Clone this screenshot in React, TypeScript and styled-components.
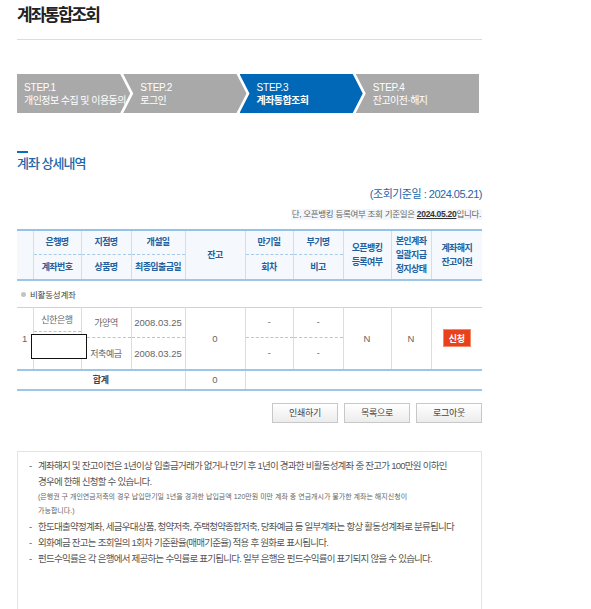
import React from 'react';
import styled, { createGlobalStyle } from 'styled-components';

const GlobalStyle = createGlobalStyle`
  html, body {
    margin: 0;
    padding: 0;
    background: #fff;
  }
  body {
    font-family: "Liberation Sans", "Noto Sans CJK KR", sans-serif;
    color: #555;
  }
`;

const Page = styled.div`
  width: 465px;
  padding-left: 17px;
`;

const PageHeader = styled.header`
  height: 39px;
  border-bottom: 1px solid #dcdcdc;
`;

const Title = styled.h1`
  margin: 0;
  padding-top: 4px;
  font-size: 17px;
  line-height: 24px;
  font-weight: 700;
  letter-spacing: -2px;
  color: #222;
`;

const Steps = styled.ol`
  display: flex;
  width: 462px;
  height: 39px;
  margin: 34px 0 0;
  padding: 0;
  list-style: none;
`;

const arrow = (first: boolean, last: boolean) => {
  const pts = [
    '0 0',
    last ? '100% 0' : 'calc(100% - 10px) 0',
    ...(last ? [] : ['100% 50%']),
    last ? '100% 100%' : 'calc(100% - 10px) 100%',
    '0 100%',
    ...(first ? [] : ['10px 50%']),
  ];
  return `polygon(${pts.join(', ')})`;
};

const Step = styled.li<{ $active?: boolean; $first: boolean; $last: boolean }>`
  flex: 1;
  display: flex;
  flex-direction: column;
  justify-content: center;
  margin-left: ${p => (p.$first ? 0 : -7)}px;
  padding-left: ${p => (p.$first ? 7 : 17)}px;
  background: ${p => (p.$active ? '#0068b7' : '#a9a9a9')};
  clip-path: ${p => arrow(p.$first, p.$last)};
  color: #fff;
  line-height: 13px;
`;

const StepNo = styled.span`
  font-family: "Liberation Sans Narrow", "Liberation Sans", sans-serif;
  font-size: 10px;
  letter-spacing: -0.2px;
`;

const StepLabel = styled.span<{ $active?: boolean }>`
  font-size: 10px;
  letter-spacing: -0.55px;
  font-weight: ${p => (p.$active ? 700 : 400)};
  white-space: nowrap;
`;

const SectionTitle = styled.h2`
  margin: 38px 0 0;
  font-size: 13px;
  line-height: 16px;
  font-weight: 500;
  letter-spacing: -1px;
  color: #2366a8;

  &::before {
    content: '';
    display: block;
    width: 11px;
    height: 2px;
    margin-bottom: 3px;
    background: #0a6ebd;
  }
`;

const BaseDate = styled.p`
  margin: 15px 0 0;
  height: 14px;
  font-size: 11px;
  line-height: 14px;
  letter-spacing: -0.5px;
  text-align: right;
  color: #2366a8;
`;

const NoteLine = styled.div`
  display: flex;
  justify-content: flex-end;
  margin-top: 8px;
  height: 11px;
`;

const NoteText = styled.span`
  padding: 0 1px;
  background: #f3f7fb;
  font-size: 8.5px;
  line-height: 11px;
  letter-spacing: -0.3px;
  color: #666;

  strong {
    color: #333;
    text-decoration: underline;
  }
`;

const TableWrap = styled.div`
  position: relative;
  margin-top: 9px;
`;

const Table = styled.table`
  width: 465px;
  table-layout: fixed;
  border-collapse: collapse;
  border-top: 2px solid #93c3ea;
`;

const Col = styled.col<{ $w: number }>`
  width: ${p => p.$w}px;
`;

const HeadRow = styled.tr<{ $h: number; $bottom?: boolean }>`
  height: ${p => p.$h}px;
  ${p => p.$bottom && 'border-bottom: 2px solid #9cc6e8;'}
`;

const Th = styled.th<{ $split?: boolean; $end?: boolean }>`
  padding: 0;
  font-size: 9px;
  font-weight: 700;
  line-height: 14px;
  letter-spacing: -0.6px;
  color: #22609f;
  background: #f5f9fd;
  border-right: ${p => (p.$end ? 'none' : '1px solid #cbe0f3')};
  ${p => p.$split && 'border-bottom: 1px dashed #a9c9e5;'}
`;

const GroupRow = styled.tr`
  height: 27px;
  border-bottom: 1px solid #bcd7ee;
`;

const GroupCell = styled.td`
  padding: 0 0 0 4px;
  font-size: 8.5px;
  letter-spacing: -0.2px;
  color: #444;

  &::before {
    content: '';
    display: inline-block;
    width: 5px;
    height: 5px;
    margin-right: 4px;
    border-radius: 50%;
    background: #c4c4c4;
    vertical-align: 1px;
  }
`;

const DataRow = styled.tr`
  border-bottom: 2px solid #9cc6e8;
`;

const Td = styled.td<{ $end?: boolean; $num?: boolean; $strong?: boolean }>`
  padding: 0;
  text-align: center;
  vertical-align: middle;
  font-size: ${p => (p.$num ? 9.5 : 9)}px;
  letter-spacing: ${p => (p.$num ? 0 : -0.4)}px;
  font-weight: ${p => (p.$strong ? 700 : 400)};
  color: ${p => (p.$strong ? '#444' : '#666')};
  border-right: ${p => (p.$end ? 'none' : '1px solid #cbe0f3')};
`;

const Half = styled.div<{ $h: number; $dashed?: boolean }>`
  display: flex;
  align-items: center;
  justify-content: center;
  height: ${p => p.$h}px;
  ${p => p.$dashed && 'border-bottom: 1px dashed #a9c9e5;'}
  box-sizing: border-box;
`;

const Num = styled.span`
  font-size: 9.5px;
  letter-spacing: 0;
`;

const ApplyButton = styled.button`
  width: 28px;
  height: 18px;
  padding: 0;
  border: 1px solid #f38a6a;
  background: #e8411c;
  color: #fff;
  font-family: inherit;
  font-size: 9px;
  font-weight: 700;
  letter-spacing: -0.3px;
  cursor: pointer;
`;

const SumRow = styled.tr`
  height: 20px;
  border-bottom: 2px solid #9cc6e8;
`;

const Redacted = styled.div`
  position: absolute;
  left: 14px;
  top: 105px;
  width: 56px;
  height: 25px;
  box-sizing: border-box;
  border: 1.5px solid #111;
  background: #fff;
`;

const Actions = styled.div`
  display: flex;
  justify-content: flex-end;
  gap: 6px;
  margin-top: 12px;
`;

const ActionButton = styled.button`
  width: 66px;
  height: 20px;
  padding: 0;
  border: 1px solid #c8c8c8;
  background: linear-gradient(#ffffff, #ececec);
  font-family: inherit;
  font-size: 9px;
  letter-spacing: -0.3px;
  color: #444;
  cursor: pointer;
`;

const NoticeBox = styled.div`
  margin-top: 28px;
  padding: 6px 0 90px 11px;
  border: 1px solid #e4e4e4;
`;

const NoticeList = styled.ul`
  margin: 0;
  padding: 0;
  list-style: none;
`;

const NoticeItem = styled.li<{ $gap?: number }>`
  display: flex;
  margin-top: ${p => p.$gap ?? 0}px;
  font-size: 9.5px;
  line-height: 16px;
  letter-spacing: -0.75px;
  color: #555;
  white-space: nowrap;
`;

const Dash = styled.span`
  flex: none;
  width: 9px;
`;

const SmallNote = styled.p`
  margin: 0;
  font-size: 7px;
  line-height: 14px;
  letter-spacing: 0;
  color: #666;
`;

const steps = [
  { no: 'STEP.1', label: '개인정보 수집 및 이용동의' },
  { no: 'STEP.2', label: '로그인' },
  { no: 'STEP.3', label: '계좌통합조회', active: true },
  { no: 'STEP.4', label: '잔고이전·해지' },
];

const colWidths = [16, 48, 50, 54, 60, 48, 50, 48, 40, 51];

export default function App() {
  return (
    <>
      <GlobalStyle />
      <Page>
        <PageHeader>
          <Title>계좌통합조회</Title>
        </PageHeader>

        <Steps>
          {steps.map((s, i) => (
            <Step key={s.no} $active={s.active} $first={i === 0} $last={i === steps.length - 1}>
              <StepNo>{s.no}</StepNo>
              <StepLabel $active={s.active}>{s.label}</StepLabel>
            </Step>
          ))}
        </Steps>

        <SectionTitle>계좌 상세내역</SectionTitle>
        <BaseDate>(조회기준일 : 2024.05.21)</BaseDate>
        <NoteLine>
          <NoteText>
            단, 오픈뱅킹 등록여부 조회 기준일은 <strong>2024.05.20</strong>입니다.
          </NoteText>
        </NoteLine>

        <TableWrap>
          <Table>
            <colgroup>
              {colWidths.map((w, i) => (
                <Col key={i} $w={w} />
              ))}
            </colgroup>
            <thead>
              <HeadRow $h={24}>
                <Th rowSpan={2} />
                <Th $split>은행명</Th>
                <Th $split>지점명</Th>
                <Th $split>개설일</Th>
                <Th rowSpan={2}>잔고</Th>
                <Th $split>만기일</Th>
                <Th $split>부기명</Th>
                <Th rowSpan={2}>오픈뱅킹<br />등록여부</Th>
                <Th rowSpan={2}>본인계좌<br />일괄지급<br />정지상태</Th>
                <Th rowSpan={2} $end>계좌해지<br />잔고이전</Th>
              </HeadRow>
              <HeadRow $h={26} $bottom>
                <Th>계좌번호</Th>
                <Th>상품명</Th>
                <Th>최종입출금일</Th>
                <Th>회차</Th>
                <Th>비고</Th>
              </HeadRow>
            </thead>
            <tbody>
              <GroupRow>
                <GroupCell colSpan={10}>비활동성계좌</GroupCell>
              </GroupRow>
              <DataRow>
                <Td $num>1</Td>
                <Td>
                  <Half $h={24} $dashed>신한은행</Half>
                  <Half $h={37} />
                </Td>
                <Td>
                  <Half $h={30} $dashed>가양역</Half>
                  <Half $h={31}>저축예금</Half>
                </Td>
                <Td>
                  <Half $h={30} $dashed><Num>2008.03.25</Num></Half>
                  <Half $h={31}><Num>2008.03.25</Num></Half>
                </Td>
                <Td $num>0</Td>
                <Td>
                  <Half $h={30} $dashed>-</Half>
                  <Half $h={31}>-</Half>
                </Td>
                <Td>
                  <Half $h={30} $dashed>-</Half>
                  <Half $h={31}>-</Half>
                </Td>
                <Td $num>N</Td>
                <Td $num>N</Td>
                <Td $end>
                  <ApplyButton type="button">신청</ApplyButton>
                </Td>
              </DataRow>
              <SumRow>
                <Td colSpan={4} $strong>합계</Td>
                <Td $num>0</Td>
                <Td colSpan={5} $end />
              </SumRow>
            </tbody>
          </Table>
          <Redacted />
        </TableWrap>

        <Actions>
          <ActionButton type="button">인쇄하기</ActionButton>
          <ActionButton type="button">목록으로</ActionButton>
          <ActionButton type="button">로그아웃</ActionButton>
        </Actions>

        <NoticeBox>
          <NoticeList>
            <NoticeItem>
              <Dash>-</Dash>
              <div>
                계좌해지 및 잔고이전은 1년이상 입출금거래가 없거나 만기 후 1년이 경과한 비활동성계좌 중 잔고가 100만원 이하인
                <br />
                경우에 한해 신청할 수 있습니다.
                <SmallNote>
                  (은행권 구 개인연금저축의 경우 납입만기일 1년을 경과한 납입금액 120만원 미만 계좌 중 연금개시가 불가한 계좌는 해지신청이
                  <br />
                  가능합니다.)
                </SmallNote>
              </div>
            </NoticeItem>
            <NoticeItem $gap={1}>
              <Dash>-</Dash>
              <div>한도대출약정계좌, 세금우대상품, 청약저축, 주택청약종합저축, 당좌예금 등 일부계좌는 항상 활동성계좌로 분류됩니다</div>
            </NoticeItem>
            <NoticeItem>
              <Dash>-</Dash>
              <div>외화예금 잔고는 조회일의 1회차 기준환율(매매기준율) 적용 후 원화로 표시됩니다.</div>
            </NoticeItem>
            <NoticeItem>
              <Dash>-</Dash>
              <div>펀드수익률은 각 은행에서 제공하는 수익률로 표기됩니다. 일부 은행은 펀드수익률이 표기되지 않을 수 있습니다.</div>
            </NoticeItem>
          </NoticeList>
        </NoticeBox>
      </Page>
    </>
  );
}
